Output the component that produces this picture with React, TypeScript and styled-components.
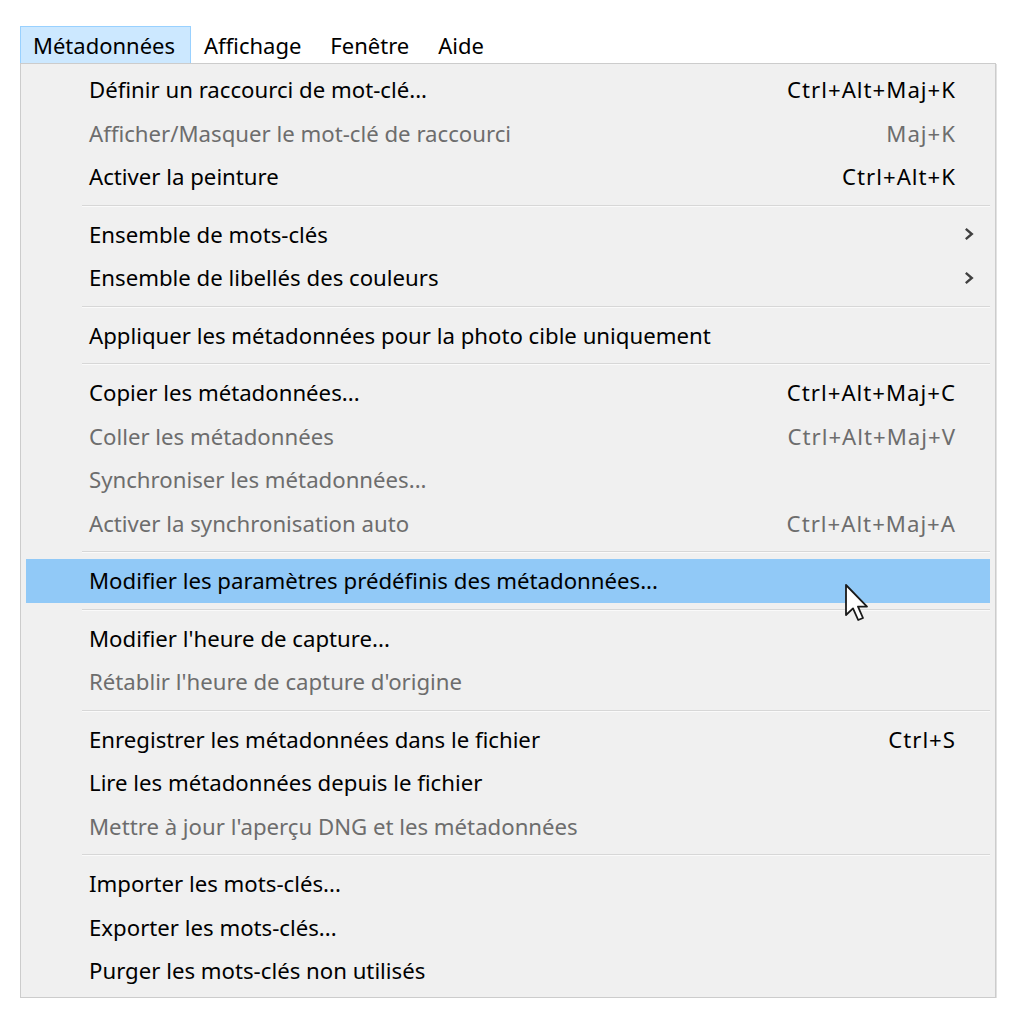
import { createGlobalStyle } from "styled-components";
import styled from "styled-components";

const GlobalStyle = createGlobalStyle`
  html, body {
    margin: 0;
    padding: 0;
    background: #ffffff;
  }
  body {
    font-family: "Noto Sans", "Open Sans", sans-serif;
  }
`;

const Page = styled.div`
  padding: 26px 0 0 20px;
  width: 976px;
`;

const MenuBar = styled.div`
  display: flex;
  height: 37px;
  align-items: stretch;
`;

const BarItem = styled.div<{ $open?: boolean }>`
  display: flex;
  align-items: center;
  padding: 0 15px 0 12px;
  font-size: 22px;
  color: #000;
  border: 1px solid ${(p) => (p.$open ? "#99d1ff" : "transparent")};
  border-bottom: none;
  background: ${(p) => (p.$open ? "#cce8ff" : "transparent")};
`;

const Panel = styled.div`
  position: relative;
  background: #f0f0f0;
  border: 1px solid #cccccc;
  box-shadow: 1px 1px 0 #e2e2e2;
  padding: 4px 5px 4px 5px;
  display: flex;
  flex-direction: column;
`;

const Row = styled.div<{ $disabled?: boolean; $active?: boolean }>`
  height: 43.5px;
  display: grid;
  grid-template-columns: 1fr auto 35px;
  align-items: center;
  padding-left: 63px;
  font-size: 22.2px;
  color: ${(p) => (p.$disabled ? "#6d6d6d" : "#000")};
  background: ${(p) => (p.$active ? "#91c9f7" : "transparent")};
`;

const Label = styled.span`
  white-space: nowrap;
`;

const Shortcut = styled.span`
  white-space: nowrap;
  text-align: right;
  letter-spacing: 1px;
  margin-right: -1px;
`;

const Arrow = styled.span`
  display: flex;
  justify-content: center;
  padding-right: 8px;
`;

const Separator = styled.div`
  height: 14px;
  display: flex;
  align-items: center;
  padding: 0 0 0 56px;
  &::after {
    content: "";
    flex: 1;
    height: 1px;
    background: #d7d7d7;
    border-bottom: 1px solid #fafafa;
  }
`;

const Cursor = styled.svg`
  position: absolute;
  left: 824px;
  top: 520px;
`;

type Entry =
  | { sep: true }
  | {
      sep?: false;
      label: string;
      shortcut?: string;
      disabled?: boolean;
      sub?: boolean;
      active?: boolean;
    };

const entries: Entry[] = [
  { label: "Définir un raccourci de mot-clé...", shortcut: "Ctrl+Alt+Maj+K" },
  { label: "Afficher/Masquer le mot-clé de raccourci", shortcut: "Maj+K", disabled: true },
  { label: "Activer la peinture", shortcut: "Ctrl+Alt+K" },
  { sep: true },
  { label: "Ensemble de mots-clés", sub: true },
  { label: "Ensemble de libellés des couleurs", sub: true },
  { sep: true },
  { label: "Appliquer les métadonnées pour la photo cible uniquement" },
  { sep: true },
  { label: "Copier les métadonnées...", shortcut: "Ctrl+Alt+Maj+C" },
  { label: "Coller les métadonnées", shortcut: "Ctrl+Alt+Maj+V", disabled: true },
  { label: "Synchroniser les métadonnées...", disabled: true },
  { label: "Activer la synchronisation auto", shortcut: "Ctrl+Alt+Maj+A", disabled: true },
  { sep: true },
  { label: "Modifier les paramètres prédéfinis des métadonnées...", active: true },
  { sep: true },
  { label: "Modifier l'heure de capture..." },
  { label: "Rétablir l'heure de capture d'origine", disabled: true },
  { sep: true },
  { label: "Enregistrer les métadonnées dans le fichier", shortcut: "Ctrl+S" },
  { label: "Lire les métadonnées depuis le fichier" },
  { label: "Mettre à jour l'aperçu DNG et les métadonnées", disabled: true },
  { sep: true },
  { label: "Importer les mots-clés..." },
  { label: "Exporter les mots-clés..." },
  { label: "Purger les mots-clés non utilisés" },
];

function Chevron() {
  return (
    <svg width="10" height="14" viewBox="0 0 10 14">
      <path d="M1.8 1.8 L7.8 7 L1.8 12.2" fill="none" stroke="#404040" strokeWidth="2.4" />
    </svg>
  );
}

export default function App() {
  return (
    <Page>
      <GlobalStyle />
      <MenuBar>
        <BarItem $open>Métadonnées</BarItem>
        <BarItem>Affichage</BarItem>
        <BarItem>Fenêtre</BarItem>
        <BarItem>Aide</BarItem>
      </MenuBar>
      <Panel>
        {entries.map((e, i) =>
          e.sep ? (
            <Separator key={i} />
          ) : (
            <Row key={i} $disabled={e.disabled} $active={e.active}>
              <Label>{e.label}</Label>
              <Shortcut>{e.shortcut}</Shortcut>
              <Arrow>{e.sub && <Chevron />}</Arrow>
            </Row>
          )
        )}
        {/* mouse pointer over the hovered item */}
        <Cursor width="24" height="38" viewBox="0 0 12 19">
          <path
            d="M0.5 0.5 L0.5 15.5 L4 12.2 L6.6 18 L9 17 L6.5 11.3 L11 11.3 Z"
            fill="#fff"
            stroke="#1a1a1a"
            strokeWidth="0.9"
            strokeLinejoin="round"
          />
        </Cursor>
      </Panel>
    </Page>
  );
}
